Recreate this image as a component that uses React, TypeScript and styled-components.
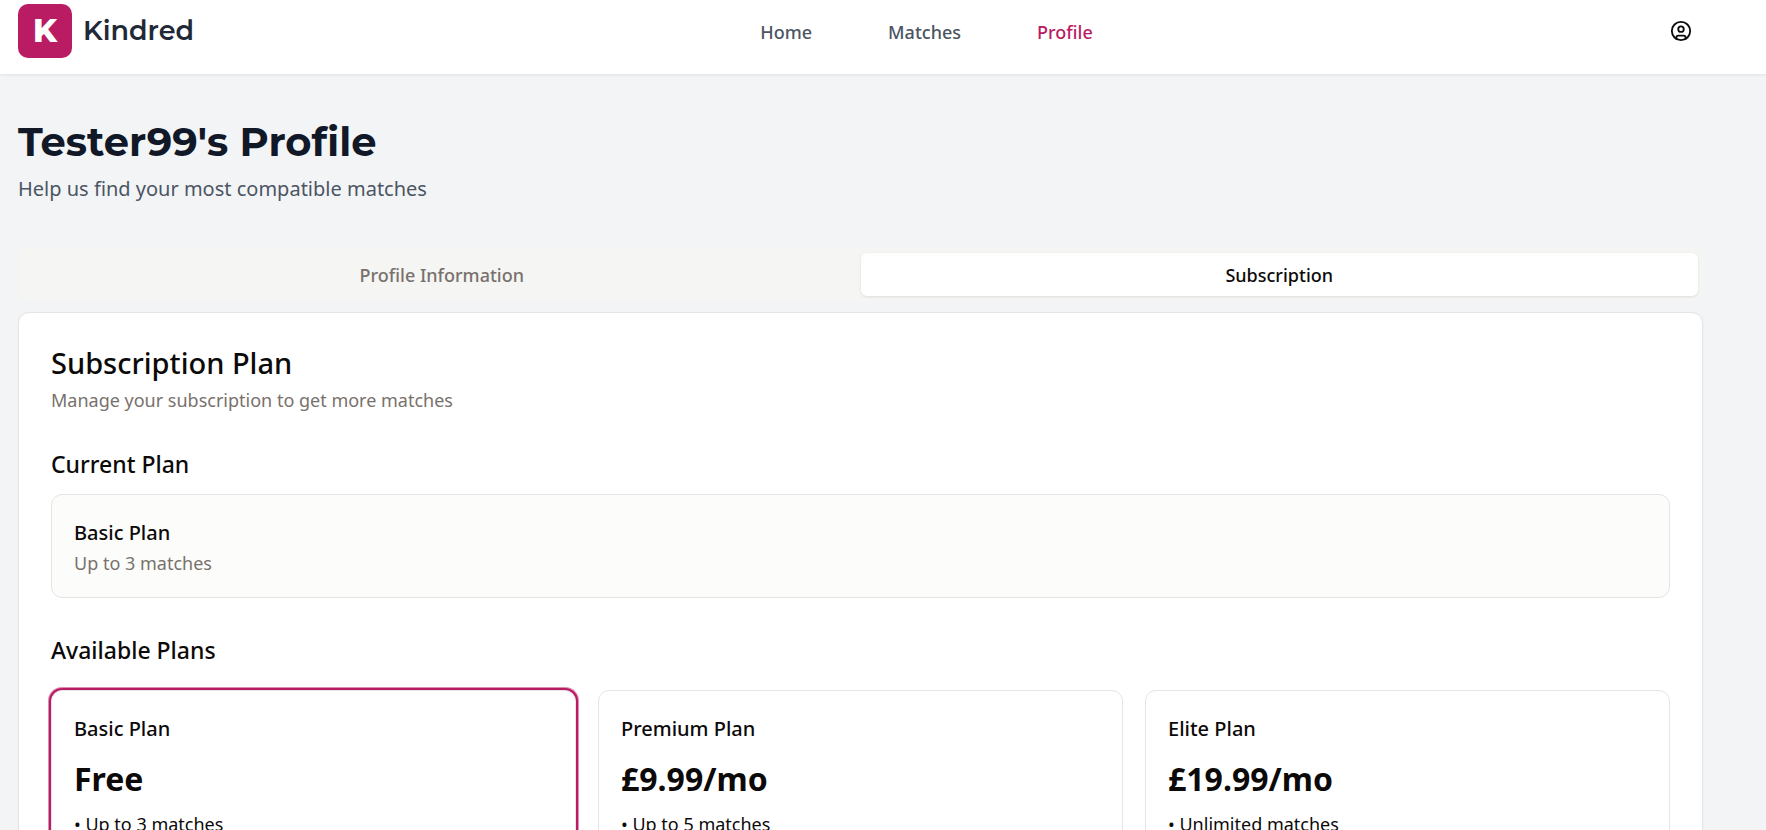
import React from "react";
import styled, { createGlobalStyle } from "styled-components";
import { CircleUser } from "lucide-react";

const sans = '"Segoe UI", "Noto Sans", "Open Sans", sans-serif';
const display = 'Montserrat, Inter, "Noto Sans", sans-serif';

const color = {
  brand: "#b91c63",
  page: "#f3f4f6",
  ink: "#0c0a09",
  muted: "#78716c",
  line: "#e5e5e5",
};

const GlobalStyle = createGlobalStyle`
  *, *::before, *::after { box-sizing: border-box; }
  body {
    margin: 0;
    min-height: 100vh;
    background: ${color.page};
    color: ${color.ink};
    font-family: ${sans};
    font-size: 18px;
    line-height: 28px;
  }
  h1, h2, h3, h4, p, ul { margin: 0; padding: 0; }
  button { font: inherit; color: inherit; border: 0; padding: 0; background: none; cursor: pointer; }
`;

const Header = styled.header`
  display: flex;
  align-items: center;
  justify-content: space-between;
  padding: 4px 63px 16px 18px;
  background: #fff;
  box-shadow: 0 1px 3px rgba(0, 0, 0, 0.08);
`;

const Brand = styled.a`
  display: flex;
  align-items: center;
  gap: 11px;
  color: #1f2937;
  font: 600 27px/36px ${display};
  text-decoration: none;
`;

const BrandMark = styled.span`
  display: grid;
  place-items: center;
  width: 54px;
  height: 54px;
  border-radius: 10px;
  background: ${color.brand};
  color: #fff;
  font-weight: 800;
  font-size: 32px;
`;

const Nav = styled.nav`
  display: flex;
  gap: 76px;
  padding-top: 2px;
`;

const NavLink = styled.a<{ $active?: boolean }>`
  color: ${(p) => (p.$active ? color.brand : "#4b5563")};
  font-weight: 500;
  text-decoration: none;
`;

const AccountButton = styled.button`
  display: grid;
  place-items: center;
  width: 44px;
  height: 44px;
`;

const Main = styled.main`
  padding: 45px 63px 0 18px;
`;

const PageTitle = styled.h1`
  color: #111827;
  font: 700 40px/46px ${display};
`;

const PageIntro = styled.p`
  margin-top: 6px;
  color: #4b5563;
  font-size: 20px;
  line-height: 36px;
`;

const TabList = styled.div`
  display: grid;
  grid-template-columns: 1fr 1fr;
  margin-top: 40px;
  padding: 6px 5px 5px;
  border-radius: 9px;
  background: #f5f5f4;
`;

const Tab = styled.button<{ $active?: boolean }>`
  height: 43px;
  border-radius: 6px;
  color: ${(p) => (p.$active ? color.ink : color.muted)};
  font-weight: 500;
  ${(p) => p.$active && "background: #fff; box-shadow: 0 1px 3px rgba(0, 0, 0, 0.1);"}
`;

const Panel = styled.section`
  margin-top: 11px;
  padding: 32px;
  border: 1px solid ${color.line};
  border-radius: 11px;
  background: #fff;
  box-shadow: 0 1px 2px rgba(0, 0, 0, 0.06);
`;

const PanelTitle = styled.h2`
  margin-bottom: 5px;
  font-size: 29px;
  font-weight: 500;
  line-height: 36px;
`;

const Muted = styled.p`
  color: ${color.muted};
`;

const SectionTitle = styled.h3<{ $above: number; $below: number }>`
  margin: ${(p) => p.$above}px 0 ${(p) => p.$below}px;
  font-size: 23px;
  font-weight: 500;
  line-height: 32px;
`;

const Box = styled.div<{ $selected?: boolean; $tinted?: boolean }>`
  padding: 22px 22px 20px;
  border: 1px solid ${color.line};
  border-radius: 11px;
  background: ${(p) => (p.$tinted ? "#fcfcfb" : "#fff")};
  box-shadow: ${(p) =>
    p.$selected ? `0 0 0 2px ${color.brand}, 0 0 0 3px ${color.brand}80` : "none"};
`;

const PlanGrid = styled.div`
  display: grid;
  grid-template-columns: repeat(3, 1fr);
  gap: 22px;
`;

const PlanName = styled.h4`
  font-size: 20px;
  font-weight: 500;
  line-height: 32px;
`;

const Price = styled.p`
  margin: 14px 0 11px;
  font-size: 32px;
  font-weight: 700;
  line-height: 40px;
`;

const Features = styled.ul`
  list-style: none;
`;

const plans = [
  { name: "Basic Plan", price: "Free", matches: "Up to 3 matches" },
  { name: "Premium Plan", price: "£9.99/mo", matches: "Up to 5 matches" },
  { name: "Elite Plan", price: "£19.99/mo", matches: "Unlimited matches" },
];

export default function App() {
  return (
    <>
      <GlobalStyle />
      <Header>
        <Brand href="#">
          <BrandMark>K</BrandMark>
          Kindred
        </Brand>
        <Nav>
          <NavLink href="#home">Home</NavLink>
          <NavLink href="#matches">Matches</NavLink>
          <NavLink href="#profile" $active aria-current="page">
            Profile
          </NavLink>
        </Nav>
        <AccountButton aria-label="Account">
          <CircleUser size={22} />
        </AccountButton>
      </Header>
      <Main>
        <PageTitle>Tester99's Profile</PageTitle>
        <PageIntro>Help us find your most compatible matches</PageIntro>
        <TabList role="tablist">
          <Tab role="tab" aria-selected={false}>Profile Information</Tab>
          <Tab role="tab" aria-selected $active>Subscription</Tab>
        </TabList>
        <Panel role="tabpanel">
          <PanelTitle>Subscription Plan</PanelTitle>
          <Muted>Manage your subscription to get more matches</Muted>
          <SectionTitle $above={34} $below={14}>Current Plan</SectionTitle>
          <Box $tinted>
            <PlanName>Basic Plan</PlanName>
            <Muted>Up to 3 matches</Muted>
          </Box>
          <SectionTitle $above={36} $below={24}>Available Plans</SectionTitle>
          <PlanGrid>
            {plans.map((plan, i) => (
              <Box key={plan.name} $selected={i === 0}>
                <PlanName>{plan.name}</PlanName>
                <Price>{plan.price}</Price>
                <Features>
                  <li>• {plan.matches}</li>
                </Features>
              </Box>
            ))}
          </PlanGrid>
        </Panel>
      </Main>
    </>
  );
}
